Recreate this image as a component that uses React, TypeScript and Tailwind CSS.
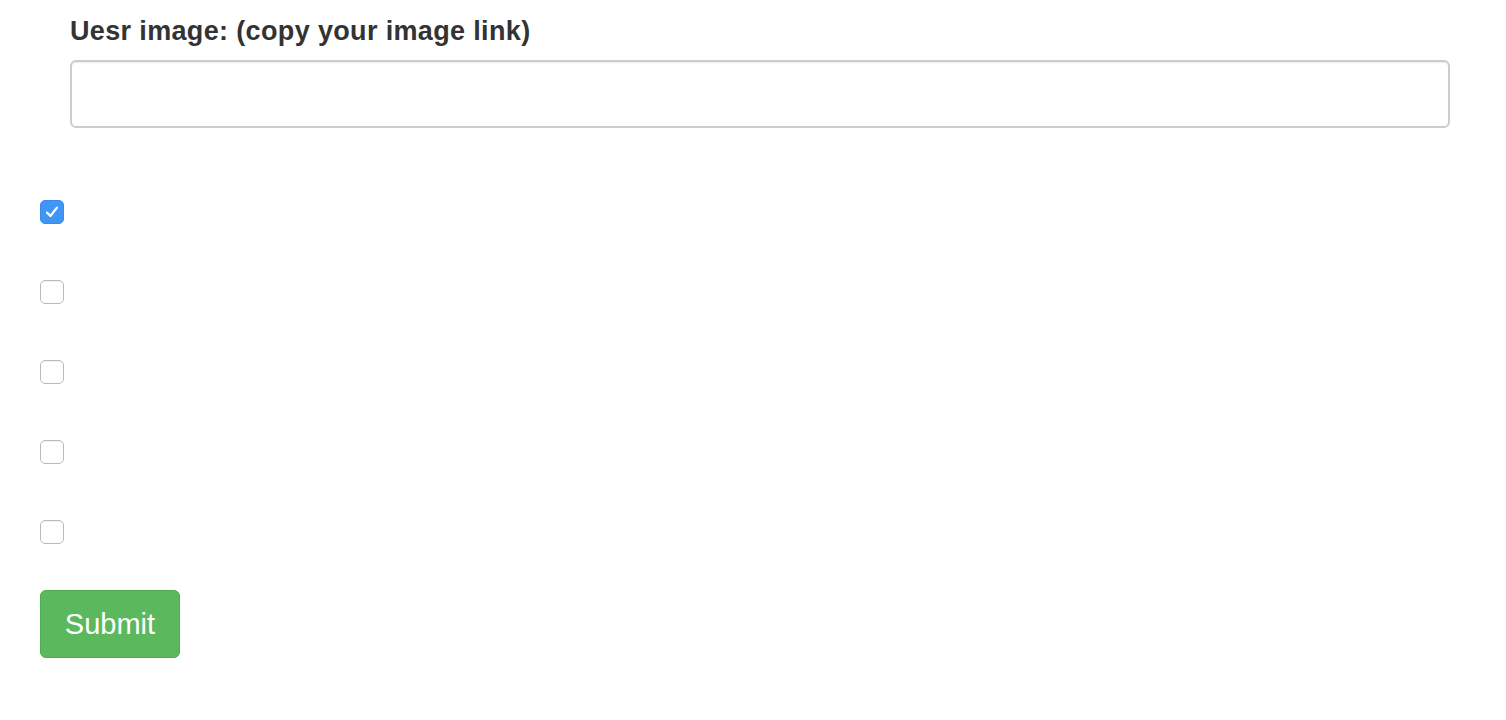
import { useState } from 'react';

const ROWS = [true, false, false, false, false];

function Box({ checked, onClick }: { checked: boolean; onClick: () => void }) {
  return (
    <button
      type="button"
      onClick={onClick}
      className={`w-6 h-6 rounded-[5px] flex items-center justify-center ${
        checked
          ? 'bg-[#4096f5] border border-[#3a8cec]'
          : 'bg-white border border-[#b9b9b9] shadow-[inset_0_1px_1px_rgba(0,0,0,0.06)]'
      }`}
    >
      {checked && (
        <svg width="16" height="16" viewBox="0 0 16 16" fill="none">
          <path d="M3 8.6 L6.4 12 L13 3.6" stroke="white" strokeWidth="2.2" strokeLinecap="round" strokeLinejoin="round" />
        </svg>
      )}
    </button>
  );
}

export default function App() {
  const [checks, setChecks] = useState(ROWS);

  return (
    <div className="min-h-screen bg-white pl-10 pr-14 font-['Liberation_Sans',Arial,sans-serif] text-[#333]">
      {/* image link field */}
      <div className="pl-[30px] pt-[18px]">
        <label className="block text-[27px] leading-[27px] tracking-[0.35px] font-bold">Uesr image: (copy your image link)</label>
        <input
          type="text"
          className="mt-[15px] block w-full h-[68px] rounded-[6px] border-2 border-[#cccccc] bg-white px-3 outline-none shadow-[inset_0_1px_1px_rgba(0,0,0,0.075)]"
        />
      </div>

      {/* checkboxes */}
      <div className="flex flex-col gap-14 mt-[72px]">
        {checks.map((c, i) => (
          <Box key={i} checked={c} onClick={() => setChecks(p => p.map((v, j) => (j === i ? !v : v)))} />
        ))}
      </div>

      <button
        type="button"
        className="mt-[46px] w-[140px] h-[68px] rounded-[6px] bg-[#5cb85c] border border-[#4cae4c] text-white text-[29px] leading-none"
      >
        Submit
      </button>
    </div>
  );
}
